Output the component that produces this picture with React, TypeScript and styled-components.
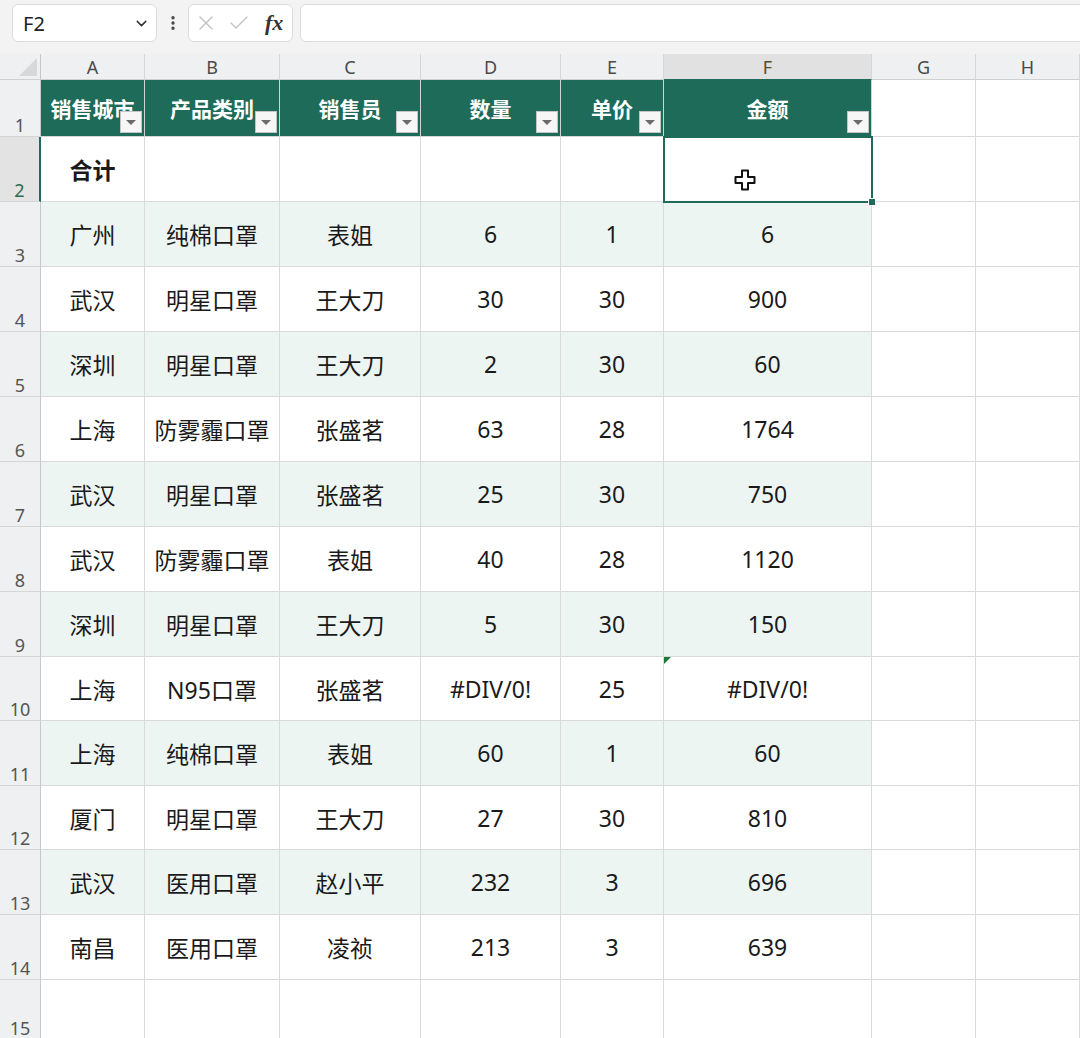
import styled, { createGlobalStyle, css } from 'styled-components';
import { ChevronDown, X, Check, EllipsisVertical } from 'lucide-react';

const GlobalStyle = createGlobalStyle`
  html, body {
    margin: 0;
    padding: 0;
    background: #f3f3f3;
  }
  body {
    font-family: "Noto Sans", "Noto Sans CJK SC", sans-serif;
    overflow: hidden;
  }
  * {
    box-sizing: border-box;
  }
`;

const GREEN = '#1e6b5a';
const GRID = '#dadada';

const columnWidths = [41, 104, 135, 141, 140, 103, 208, 104];
const rowHeights = [65, 65, 65, 65, 65, 65, 65, 65, 64, 65, 64, 65, 65];

const headers = ['销售城市', '产品类别', '销售员', '数量', '单价', '金额'];

const rows: string[][] = [
  ['广州', '纯棉口罩', '表姐', '6', '1', '6'],
  ['武汉', '明星口罩', '王大刀', '30', '30', '900'],
  ['深圳', '明星口罩', '王大刀', '2', '30', '60'],
  ['上海', '防雾霾口罩', '张盛茗', '63', '28', '1764'],
  ['武汉', '明星口罩', '张盛茗', '25', '30', '750'],
  ['武汉', '防雾霾口罩', '表姐', '40', '28', '1120'],
  ['深圳', '明星口罩', '王大刀', '5', '30', '150'],
  ['上海', 'N95口罩', '张盛茗', '#DIV/0!', '25', '#DIV/0!'],
  ['上海', '纯棉口罩', '表姐', '60', '1', '60'],
  ['厦门', '明星口罩', '王大刀', '27', '30', '810'],
  ['武汉', '医用口罩', '赵小平', '232', '3', '696'],
  ['南昌', '医用口罩', '凌祯', '213', '3', '639'],
];

const Page = styled.div`
  width: 1080px;
  height: 1038px;
  overflow: hidden;
  background: #f3f3f3;
`;

const Toolbar = styled.div`
  display: flex;
  align-items: flex-start;
  height: 54px;
  padding: 4px 0 0 12px;
`;

const NameBox = styled.div`
  flex: 0 0 145px;
  height: 38px;
  background: #fff;
  border: 1px solid #dcdcdc;
  border-radius: 6px;
  display: flex;
  align-items: center;
  justify-content: space-between;
  padding: 0 6px 0 10px;
  font-size: 20px;
  color: #222;
`;

const Dots = styled.div`
  flex: 0 0 31px;
  height: 38px;
  display: flex;
  align-items: center;
  justify-content: center;
  color: #444;
`;

const ActionGroup = styled.div`
  flex: 0 0 105px;
  height: 38px;
  background: #fff;
  border: 1px solid #dcdcdc;
  border-radius: 6px;
  display: flex;
  align-items: center;
  gap: 9px;
  padding-left: 5px;
  color: #c4c4c4;
`;

const Fx = styled.span`
  font-family: "Liberation Serif", serif;
  font-style: italic;
  font-weight: bold;
  font-size: 22px;
  color: #333;
  margin-left: 5px;
`;

const FormulaInput = styled.div`
  margin-left: 7px;
  flex: 0 0 820px;
  height: 38px;
  background: #fff;
  border: 1px solid #dcdcdc;
  border-radius: 6px;
`;

const Sheet = styled.div`
  display: grid;
  grid-template-columns: ${columnWidths.map((w) => `${w}px`).join(' ')} 1fr;
  grid-template-rows: 26px 57px ${rowHeights.map((h) => `${h}px`).join(' ')} 60px;
  background: #fff;
`;

const Corner = styled.div`
  background: #eef0f2;
  border-right: 1px solid #c8c8c8;
  border-bottom: 1px solid #d0d0d0;
  display: flex;
  align-items: flex-end;
  justify-content: flex-end;
  padding: 0 3px 3px 0;
`;

const ColHead = styled.div<{ $active?: boolean }>`
  background: ${(p) => (p.$active ? '#e1e1e1' : '#eef0f2')};
  border-right: 1px solid #d6d6d6;
  border-bottom: 1px solid ${(p) => (p.$active ? GREEN : '#d0d0d0')};
  display: flex;
  align-items: center;
  justify-content: center;
  font-size: 18px;
  color: ${(p) => (p.$active ? '#5a4a2a' : '#4a4a4a')};
`;

const RowHead = styled.div<{ $active?: boolean }>`
  background: ${(p) => (p.$active ? '#e3e3e3' : '#eef0f2')};
  border-right: ${(p) => (p.$active ? `2px solid ${GREEN}` : '1px solid #c8c8c8')};
  border-bottom: 1px solid #d6d6d6;
  display: flex;
  align-items: flex-end;
  justify-content: center;
  font-size: 18px;
  line-height: 22px;
  color: ${(p) => (p.$active ? '#2e6b4e' : '#555')};
`;

const HeadCell = styled.div`
  position: relative;
  background: ${GREEN};
  border-right: 1px solid #cfd6d3;
  border-bottom: 1px solid #d8d8d8;
  display: flex;
  align-items: center;
  justify-content: center;
  color: #fff;
  font-weight: bold;
  font-size: 21px;
  white-space: nowrap;
`;

const FilterButton = styled.div`
  position: absolute;
  right: 2px;
  bottom: 3px;
  width: 22px;
  height: 22px;
  background: #f6f6f6;
  border: 1px solid #c4c4c4;
  display: flex;
  align-items: center;
  justify-content: center;

  &::after {
    content: '';
    border-left: 5px solid transparent;
    border-right: 5px solid transparent;
    border-top: 5px solid #6a6a6a;
  }
`;

const Cell = styled.div<{ $stripe?: boolean; $bold?: boolean; $selected?: boolean; $flag?: boolean }>`
  position: relative;
  background: ${(p) => (p.$stripe ? '#edf5f2' : '#fff')};
  border-right: 1px solid ${GRID};
  border-bottom: 1px solid ${GRID};
  display: flex;
  align-items: center;
  justify-content: center;
  font-size: 23px;
  color: #1a1a1a;
  font-weight: ${(p) => (p.$bold ? 'bold' : 'normal')};
  white-space: nowrap;

  ${(p) =>
    p.$selected &&
    css`
      &::after {
        content: '';
        position: absolute;
        inset: -1px -2px -2px -1px;
        border: 2px solid ${GREEN};
        z-index: 2;
      }
    `}

  ${(p) =>
    p.$flag &&
    css`
      &::before {
        content: '';
        position: absolute;
        left: 0;
        top: 0;
        border-top: 7px solid #1a7a33;
        border-right: 7px solid transparent;
      }
    `}
`;

const FillHandle = styled.div`
  position: absolute;
  right: -5px;
  bottom: -5px;
  width: 8px;
  height: 8px;
  background: ${GREEN};
  border: 1px solid #fff;
  z-index: 3;
`;

const Cursor = styled.svg`
  position: absolute;
  left: 70px;
  top: 32px;
  z-index: 3;
`;

function CornerMark() {
  return (
    <svg width="18" height="18" viewBox="0 0 18 18">
      <polygon points="18,0 18,18 0,18" fill="#d6d8da" />
    </svg>
  );
}

export default function App() {
  const letters = ['A', 'B', 'C', 'D', 'E', 'F', 'G', 'H'];

  return (
    <Page>
      <GlobalStyle />
      <Toolbar>
        <NameBox>
          <span>F2</span>
          <ChevronDown size={17} color="#333" strokeWidth={2} />
        </NameBox>
        <Dots>
          <EllipsisVertical size={18} strokeWidth={2.5} />
        </Dots>
        <ActionGroup>
          <X size={24} strokeWidth={1.4} />
          <Check size={24} strokeWidth={1.4} />
          <Fx>fx</Fx>
        </ActionGroup>
        <FormulaInput />
      </Toolbar>

      <Sheet>
        <Corner>
          <CornerMark />
        </Corner>
        {letters.map((l) => (
          <ColHead key={l} $active={l === 'F'}>
            {l}
          </ColHead>
        ))}

        <RowHead>1</RowHead>
        {headers.map((h) => (
          <HeadCell key={h}>
            {h}
            <FilterButton />
          </HeadCell>
        ))}
        <Cell />
        <Cell />

        <RowHead $active>2</RowHead>
        <Cell $bold>合计</Cell>
        <Cell />
        <Cell />
        <Cell />
        <Cell />
        <Cell $selected>
          <Cursor width="22" height="22" viewBox="0 0 22 22">
            <path
              d="M8 1.5h6v6.5h6.5v6h-6.5v6.5h-6v-6.5h-6.5v-6h6.5z"
              fill="#fff"
              stroke="#111"
              strokeWidth="2"
              strokeLinejoin="round"
            />
          </Cursor>
          <FillHandle />
        </Cell>
        <Cell />
        <Cell />

        {rows.map((row, i) => {
          const stripe = i % 2 === 0;
          return [
            <RowHead key={`h${i}`}>{i + 3}</RowHead>,
            ...row.map((value, j) => (
              <Cell key={`c${i}-${j}`} $stripe={stripe} $flag={i === 7 && j === 5}>
                {value}
              </Cell>
            )),
            <Cell key={`g${i}`} />,
            <Cell key={`hh${i}`} />,
          ];
        })}

        <RowHead>15</RowHead>
        {letters.map((l) => (
          <Cell key={`e${l}`} />
        ))}
      </Sheet>
    </Page>
  );
}
